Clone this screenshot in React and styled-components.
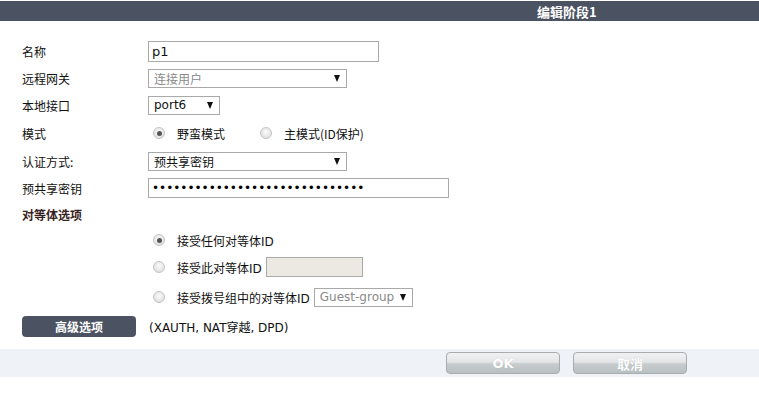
import React from 'react'
import styled, { createGlobalStyle } from 'styled-components'

const GlobalStyle = createGlobalStyle`
  body {
    margin: 0;
    background: #fff;
    font-family: "DejaVu Sans", "Noto Sans CJK SC", sans-serif;
    font-size: 12px;
    color: #222;
  }
`

const Page = styled.div`
  width: 759px;
  height: 394px;
  padding-top: 1px;
  box-sizing: border-box;
`

const Header = styled.div`
  height: 20px;
  background: #4b5262;
  display: flex;
  align-items: center;
  padding-left: 537px;
  color: #fff;
  font-family: "Noto Sans CJK SC", sans-serif;
  font-weight: bold;
  font-size: 13px;
`

const Form = styled.div`
  padding-top: 16px;
`

const Row = styled.div`
  display: flex;
  align-items: center;
  height: ${({ $h }) => $h}px;
  padding-left: 22px;
`

const Label = styled.div`
  width: 126px;
  flex: none;
  font-family: "Noto Sans CJK SC", sans-serif;
  color: ${({ $bold }) => ($bold ? '#3a1f1f' : '#111')};
  font-weight: ${({ $bold }) => ($bold ? 'bold' : 'normal')};
`

const TextInput = styled.div`
  box-sizing: border-box;
  width: ${({ $w }) => $w}px;
  height: ${({ $hh }) => $hh || 20}px;
  border: 1px solid #a9a9a9;
  background: ${({ $disabled }) => ($disabled ? '#ebe9e2' : '#fff')};
  display: flex;
  align-items: center;
  padding-left: 3px;
  font-size: 13px;
  color: #111;
`

const Dots = styled.span`
  font-family: "DejaVu Sans", sans-serif;
  font-size: 12px;
  color: #000;
`

const Select = styled.div`
  box-sizing: border-box;
  width: ${({ $w }) => $w}px;
  height: 19px;
  border: 1px solid #a9a9a9;
  background: #fff;
  display: flex;
  align-items: center;
  justify-content: space-between;
  padding: 0 6px 0 5px;
  font-family: ${({ $cjk }) => ($cjk ? '"Noto Sans CJK SC", sans-serif' : '"DejaVu Sans", sans-serif')};
  font-size: 12px;
  color: ${({ $muted }) => ($muted ? '#8a8a8a' : '#111')};
  flex: none;
`

const Arrow = styled.span`
  width: 0;
  height: 0;
  border-left: 3.5px solid transparent;
  border-right: 3.5px solid transparent;
  border-top: 7px solid #111;
`

const Radio = styled.span`
  box-sizing: border-box;
  width: 12px;
  height: 12px;
  border-radius: 50%;
  border: 1px solid #c4c4c4;
  background: radial-gradient(circle at 50% 40%, #fbfbfb 0%, #e2e2e2 70%, #d0d0d0 100%);
  display: inline-flex;
  align-items: center;
  justify-content: center;
  margin: 0 12px 0 5px;
  flex: none;

  &::after {
    content: '';
    width: 5px;
    height: 5px;
    border-radius: 50%;
    background: ${({ $checked }) => ($checked ? '#555' : 'transparent')};
  }
`

const Choice = styled.span`
  display: inline-flex;
  align-items: center;
  margin-right: ${({ $gap }) => $gap || 0}px;
  color: #111;
  white-space: nowrap;
`

const ChoiceText = styled.span`
  font-family: "Noto Sans CJK SC", sans-serif;
  margin-right: ${({ $gap }) => $gap || 0}px;
`

const Latin = styled.span`
  font-family: "DejaVu Sans", sans-serif;
`

const AdvButton = styled.div`
  width: 114px;
  height: 21px;
  margin-right: 13px;
  border-radius: 4px;
  background: #4b5262;
  color: #fff;
  font-family: "Noto Sans CJK SC", sans-serif;
  font-weight: bold;
  display: flex;
  align-items: center;
  justify-content: center;
  flex: none;
`

const Note = styled.span`
  font-family: "DejaVu Sans", "Noto Sans CJK SC", sans-serif;
  color: #111;
`

const Footer = styled.div`
  margin-top: 11px;
  height: 28px;
  background: #eff3f7;
  display: flex;
  align-items: center;
  padding-left: 446px;
  gap: 13px;
`

const FootButton = styled.div`
  box-sizing: border-box;
  width: 114px;
  height: 22px;
  border: 1px solid #a8acae;
  border-radius: 4px;
  background: linear-gradient(#f0f2f2 0%, #e3e6e7 45%, #c6cccd 55%, #b9c0c2 100%);
  color: #fff;
  font-family: "DejaVu Sans", "Noto Sans CJK SC", sans-serif;
  font-weight: bold;
  font-size: 13px;
  display: flex;
  align-items: center;
  justify-content: center;
  text-shadow: 0 0 1px rgba(0, 0, 0, 0.15);
`

export default function App() {
  return (
    <Page>
      <GlobalStyle />
      <Header>编辑阶段1</Header>
      <Form>
        <Row $h={28}>
          <Label>名称</Label>
          <TextInput $w={231} $hh={21}>p1</TextInput>
        </Row>
        <Row $h={27}>
          <Label>远程网关</Label>
          <Select $w={199} $muted $cjk>
            <span>连接用户</span>
            <Arrow />
          </Select>
        </Row>
        <Row $h={26}>
          <Label>本地接口</Label>
          <Select $w={72}>
            <span>port6</span>
            <Arrow />
          </Select>
        </Row>
        <Row $h={30}>
          <Label>模式</Label>
          <Choice $gap={30}>
            <Radio $checked />
            <ChoiceText>野蛮模式</ChoiceText>
          </Choice>
          <Choice>
            <Radio />
            <ChoiceText>主模式(ID保护)</ChoiceText>
          </Choice>
        </Row>
        <Row $h={26}>
          <Label>认证方式:</Label>
          <Select $w={199} $cjk>
            <span>预共享密钥</span>
            <Arrow />
          </Select>
        </Row>
        <Row $h={28}>
          <Label>预共享密钥</Label>
          <TextInput $w={301}>
            <Dots>{'•'.repeat(30)}</Dots>
          </TextInput>
        </Row>
        <Row $h={24}>
          <Label $bold>对等体选项</Label>
        </Row>
        <Row $h={28}>
          <Label />
          <Choice>
            <Radio $checked />
            <ChoiceText>接受任何对等体<Latin>ID</Latin></ChoiceText>
          </Choice>
        </Row>
        <Row $h={26}>
          <Label />
          <Choice>
            <Radio />
            <ChoiceText $gap={4}>接受此对等体<Latin>ID</Latin></ChoiceText>
          </Choice>
          <TextInput $w={97} $hh={20} $disabled />
        </Row>
        <Row $h={34}>
          <Label />
          <Choice>
            <Radio />
            <ChoiceText $gap={4}>接受拨号组中的对等体<Latin>ID</Latin></ChoiceText>
          </Choice>
          <Select $w={99} $muted>
            <span>Guest-group</span>
            <Arrow />
          </Select>
        </Row>
        <Row $h={24}>
          <AdvButton>高级选项</AdvButton>
          <Note>(XAUTH, NAT穿越, DPD)</Note>
        </Row>
      </Form>
      <Footer>
        <FootButton>OK</FootButton>
        <FootButton>取消</FootButton>
      </Footer>
    </Page>
  )
}
